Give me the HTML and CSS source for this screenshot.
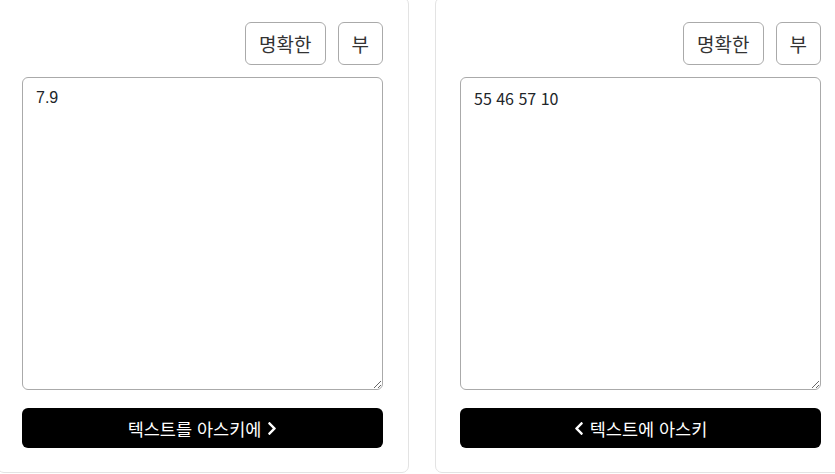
FILE: index.html
```html
<!DOCTYPE html>
<html lang="ko">
<head>
<meta charset="utf-8">
<link rel="stylesheet" href="styles.css">
</head>
<body>
<div class="row">
  <div class="card">
    <div class="tools">
      <button class="tool">명확한</button>
      <button class="tool">부</button>
    </div>
    <textarea class="box box-left">7.9</textarea>
    <button class="go">텍스트를 아스키에 <svg class="chev" viewBox="0 0 320 512" width="10" height="15"><path d="M285.5 273L91.1 467.3c-9.4 9.4-24.6 9.4-33.9 0l-22.7-22.7c-9.4-9.4-9.4-24.5 0-33.9L188.5 256 34.5 101.3c-9.3-9.4-9.3-24.5 0-33.9l22.7-22.7c9.4-9.4 24.6-9.4 33.9 0L285.5 239c9.4 9.4 9.4 24.6 0 34z" fill="#fff"/></svg></button>
  </div>
  <div class="card">
    <div class="tools">
      <button class="tool">명확한</button>
      <button class="tool">부</button>
    </div>
    <textarea class="box">55 46 57 10</textarea>
    <button class="go"><svg class="chev" viewBox="0 0 320 512" width="10" height="15"><path d="M34.5 239L228.9 44.7c9.4-9.4 24.6-9.4 33.9 0l22.7 22.7c9.4 9.4 9.4 24.5 0 33.9L131.5 256l154 154.7c9.3 9.4 9.3 24.5 0 33.9l-22.7 22.7c-9.4 9.4-24.6 9.4-33.9 0L34.5 273c-9.4-9.4-9.4-24.6 0-34z" fill="#fff"/></svg> 텍스트에 아스키</button>
  </div>
</div>
</body>
</html>
```
FILE: styles.css
```css
html, body {
  margin: 0;
  padding: 0;
  background: #fff;
  overflow: hidden;
}
body {
  font-family: "Noto Sans CJK KR", "Noto Sans", sans-serif;
  color: #212529;
}
.row {
  display: flex;
  gap: 26px;
  margin: -3px 0 0 -3px;
  width: 900px;
}
.card {
  width: 361px;
  flex: none;
  border: 1px solid #e3e3e3;
  border-radius: 7px;
  padding: 24px 25px 24px 24px;
  display: flex;
  flex-direction: column;
}
.tools {
  display: flex;
  justify-content: flex-end;
  gap: 12px;
  margin-bottom: 12px;
}
.tool {
  height: 43px;
  padding: 0 13px;
  background: #fff;
  border: 1px solid #aaa;
  border-radius: 6px;
  font-family: "Noto Sans CJK KR", sans-serif;
  font-size: 19px;
  color: #333;
}
.box {
  height: 313px;
  box-sizing: border-box;
  width: 100%;
  border: 1px solid #aaa;
  border-radius: 6px;
  padding: 9px 13px;
  font-family: "Noto Sans CJK KR", sans-serif;
  font-size: 16px;
  line-height: 22px;
  color: #212529;
  margin: 0 0 18px 0;
  display: block;
}
.box-left {
  font-family: "Liberation Sans", Arial, sans-serif;
}
.go {
  height: 40px;
  background: #000;
  color: #fff;
  border: none;
  border-radius: 6px;
  font-family: "Noto Sans CJK KR", sans-serif;
  font-size: 17.5px;
  display: flex;
  align-items: center;
  justify-content: center;
  gap: 6px;
}
.chev {
  display: block;
}
```
